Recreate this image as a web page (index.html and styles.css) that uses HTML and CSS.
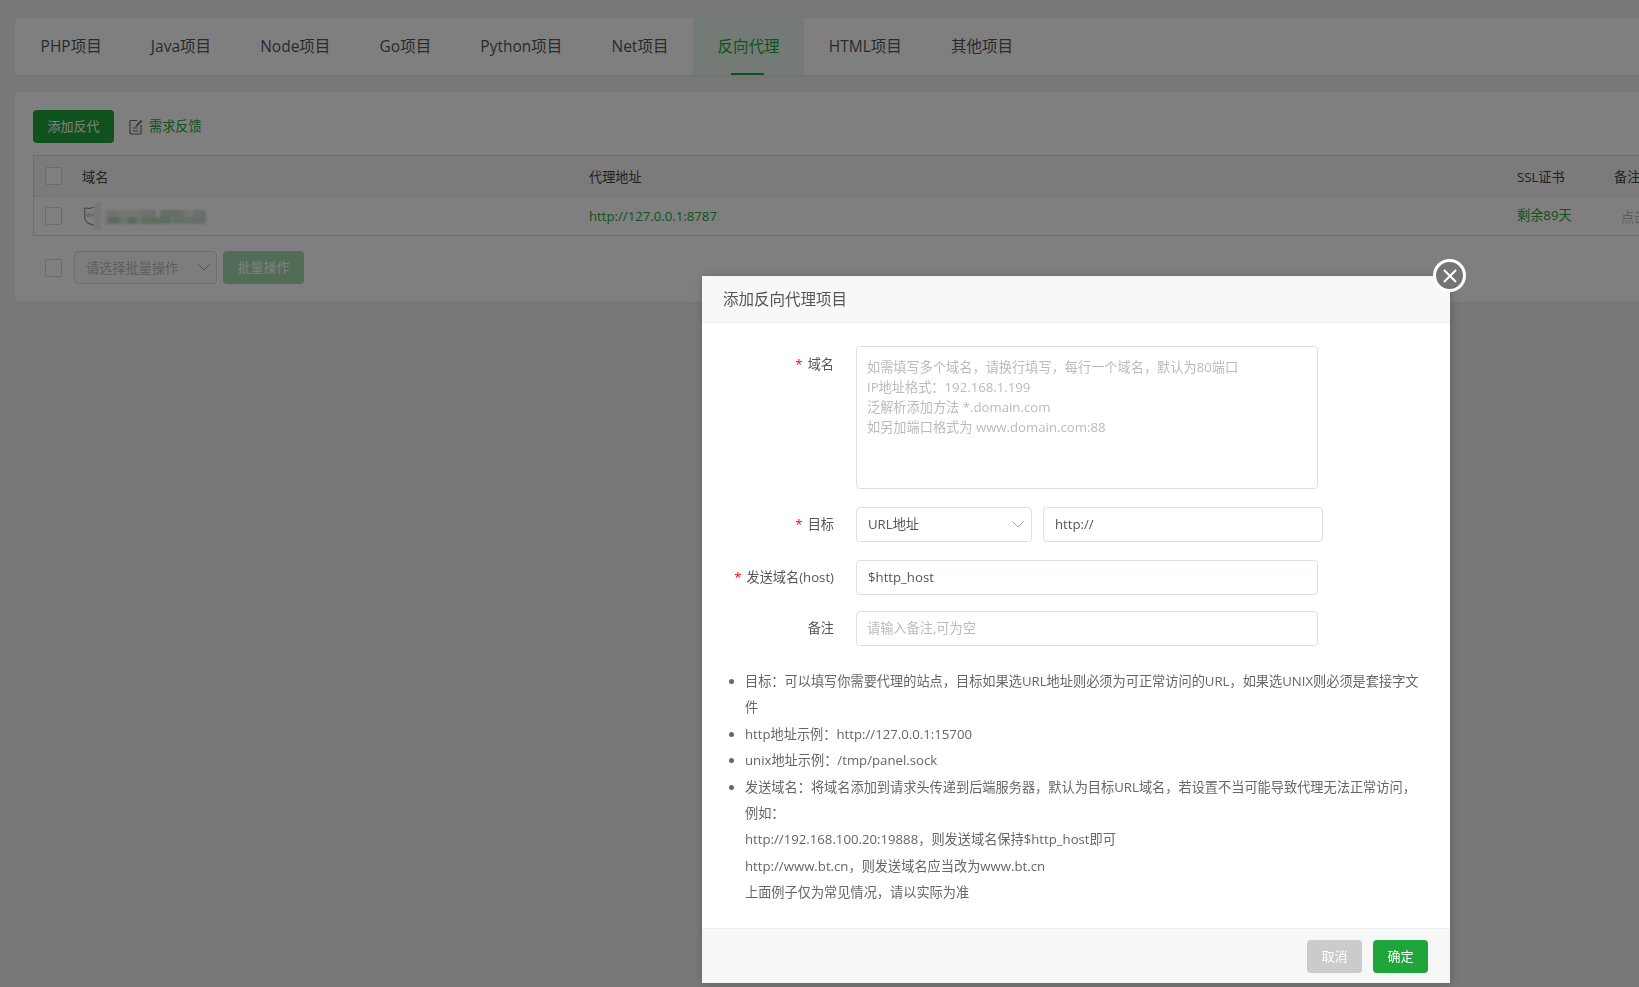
FILE: index.html
```html
<!DOCTYPE html>
<html lang="zh-CN">
<head>
    <meta charset="UTF-8">
    <meta name="viewport" content="width=device-width, initial-scale=1.0">
    <title>反向代理</title>
    <link rel="stylesheet" href="styles.css">
</head>
<body>

    <div class="page">
        <!-- Project tabs -->
        <div class="card tabs">
            <span class="tab">PHP项目</span>
            <span class="tab">Java项目</span>
            <span class="tab">Node项目</span>
            <span class="tab">Go项目</span>
            <span class="tab">Python项目</span>
            <span class="tab">Net项目</span>
            <span class="tab active">反向代理</span>
            <span class="tab">HTML项目</span>
            <span class="tab">其他项目</span>
        </div>

        <!-- Proxy list -->
        <div class="card content">
            <div class="toolbar">
                <button class="btn btn-green btn-add">添加反代</button>
                <a class="feedback">
                    <svg class="feedback-icon" viewBox="0 0 14 16" fill="none" stroke="#6f6f6f" stroke-width="1.200">
                        <path d="M8.500 1.500H2a1 1 0 0 0-1 1V14a1 1 0 0 0 1 1h9a1 1 0 0 0 1-1V6"/>
                        <path d="M3.500 9h5M3.500 12h6"/>
                        <path d="M7 6.500 12 1l1.200 1.200-5.200 5.300-1.300.3z" fill="#6f6f6f" stroke-width=".6"/>
                    </svg>
                    需求反馈
                </a>
            </div>

            <div class="table">
                <div class="row row-head">
                    <span class="check"></span>
                    <span class="col-name">域名</span>
                    <span class="col-url">代理地址</span>
                    <span class="col-ssl">SSL证书</span>
                    <span class="col-note">备注</span>
                </div>
                <div class="row">
                    <span class="check"></span>
                    <span class="col-name">
                        <svg class="shield" viewBox="0 0 11 20" fill="none" stroke="#8a8a8a" stroke-width="1.100">
                            <path d="M10.500 1 5.500 2.500.7 2v9.500c0 3.500 4 6.500 9.800 8"/>
                            <text x="2" y="10.500" font-size="5" fill="#999" stroke="none">WAF</text>
                        </svg>
                        <svg class="mosaic" viewBox="0 0 112 28">
                            <rect x="0" y="0" width="7" height="28" fill="#efefef"/>
                            <rect x="12" y="8" width="12" height="7" fill="#dbe9dd"/>
                            <rect x="24" y="8" width="22" height="7" fill="#e6efe7"/>
                            <rect x="46" y="8" width="16" height="7" fill="#d8e7da"/>
                            <rect x="66" y="8" width="24" height="7" fill="#c8dfcb"/>
                            <rect x="90" y="8" width="10" height="7" fill="#e9f0ea"/>
                            <rect x="100" y="8" width="12" height="7" fill="#cfe2d2"/>
                            <rect x="10" y="15" width="4" height="7" fill="#e6efe7"/>
                            <rect x="14" y="15" width="12" height="7" fill="#b9d6be"/>
                            <rect x="26" y="15" width="8" height="7" fill="#d7e6d9"/>
                            <rect x="34" y="15" width="8" height="7" fill="#b5d3ba"/>
                            <rect x="42" y="15" width="6" height="7" fill="#dceadd"/>
                            <rect x="48" y="15" width="28" height="7" fill="#c0dac4"/>
                            <rect x="76" y="15" width="4" height="7" fill="#dceadd"/>
                            <rect x="80" y="15" width="32" height="7" fill="#cbdfce"/>
                        </svg>
                    </span>
                    <span class="col-url link">http://127.0.0.1:8787</span>
                    <span class="col-ssl ssl-ok">剩余89天</span>
                    <span class="col-note note-add">点击添加备注</span>
                </div>
            </div>

            <div class="batch">
                <span class="check"></span>
                <div class="batch-select">
                    <span>请选择批量操作</span>
                    <svg class="chevron" viewBox="0 0 12 7" fill="none" stroke="#a0a0a0" stroke-width="1"><path d="M.5.500 6 6l5.500-5.500"/></svg>
                </div>
                <button class="btn btn-batch">批量操作</button>
            </div>
        </div>
    </div>

    <div class="overlay"></div>

    <!-- Add proxy dialog -->
    <div class="dialog">
        <div class="dialog-title">添加反向代理项目</div>
        <div class="dialog-body">
            <div class="form-row form-row-tall">
                <label class="form-label"><i>*</i>域名</label>
                <div class="field field-area">如需填写多个域名，请换行填写，每行一个域名，默认为80端口<br>IP地址格式：192.168.1.199<br>泛解析添加方法 *.domain.com<br>如另加端口格式为 www.domain.com:88</div>
            </div>
            <div class="form-row">
                <label class="form-label"><i>*</i>目标</label>
                <div class="field field-select">
                    <span>URL地址</span>
                    <svg class="chevron" viewBox="0 0 12 7" fill="none" stroke="#a8a8a8" stroke-width="1"><path d="M.5.500 6 6l5.500-5.500"/></svg>
                </div>
                <div class="field field-target">http://</div>
            </div>
            <div class="form-row">
                <label class="form-label"><i>*</i>发送域名(host)</label>
                <div class="field">$http_host</div>
            </div>
            <div class="form-row">
                <label class="form-label">备注</label>
                <div class="field field-empty">请输入备注,可为空</div>
            </div>

            <ul class="help">
                <li>目标：可以填写你需要代理的站点，目标如果选URL地址则必须为可正常访问的URL，如果选UNIX则必须是套接字文件</li>
                <li>http地址示例：http://127.0.0.1:15700</li>
                <li>unix地址示例：/tmp/panel.sock</li>
                <li>发送域名：将域名添加到请求头传递到后端服务器，默认为目标URL域名，若设置不当可能导致代理无法正常访问，例如：<br>http://192.168.100.20:19888，则发送域名保持$http_host即可<br>http://www.bt.cn，则发送域名应当改为www.bt.cn<br>上面例子仅为常见情况，请以实际为准</li>
            </ul>
        </div>
        <div class="dialog-foot">
            <button class="btn btn-cancel">取消</button>
            <button class="btn btn-green">确定</button>
        </div>
        <span class="dialog-close">
            <svg viewBox="0 0 14 14" fill="none" stroke="#fff" stroke-width="2"><path d="M1 1l12 12M13 1 1 13"/></svg>
        </span>
    </div>

</body>
</html>
```

FILE: styles.css
```css
html, body {
    height: 100%;
}

body {
    margin: 0;
    overflow: hidden;
    background-color: #f0f0f0;
    color: #666;
    font-family: "Open Sans", "Noto Sans CJK SC", sans-serif;
    font-size: 13.2px;
}

.page {
    padding: 18px 0 0 15px;
    width: 1720px;
    box-sizing: border-box;
}

.card {
    background-color: #fff;
    border-radius: 5px;
    box-shadow: 0 1px 3px rgba(0, 0, 0, 0.05);
}

/* Tabs */
.tabs {
    display: flex;
    height: 57px;
    padding-left: 1px;
}

.tab {
    position: relative;
    padding: 0 24.6px;
    line-height: 57px;
    font-size: 15.5px;
    color: #555;
}

.tab.active {
    color: #20a53a;
    background-color: #e9f6ec;
}

.tab.active::after {
    content: "";
    position: absolute;
    left: 38px;
    bottom: 0;
    width: 33px;
    height: 2px;
    background-color: #20a53a;
}

/* List */
.content {
    margin-top: 17px;
    height: 210px;
    padding: 18px;
    box-sizing: border-box;
}

.toolbar {
    display: flex;
    align-items: center;
    height: 33px;
}

.btn {
    height: 33px;
    width: 55px;
    padding: 0 0 2px;
    border: 0;
    border-radius: 4px;
    color: #fff;
    font-family: inherit;
    font-size: 13px;
}

.btn-green {
    background-color: #20a53a;
}

.btn-add {
    width: 81px;
}

.btn-batch {
    width: 81px;
    margin-left: 6px;
    background-color: #a6d8b0;
}

.btn-cancel {
    background-color: #cbcbcb;
}

.feedback {
    display: flex;
    align-items: center;
    margin-left: 15px;
    margin-top: -3px;
    color: #20a53a;
}

.feedback-icon {
    width: 14px;
    height: 16px;
    margin-top: 3px;
    margin-right: 6px;
}

.table {
    margin-top: 12px;
    border: 1px solid #ddd;
    border-right: 0;
}

.row {
    display: flex;
    align-items: center;
    height: 38px;
    padding-left: 11px;
}

.row-head {
    height: 41px;
    box-sizing: border-box;
    background-color: #f6f6f6;
    border-bottom: 1px solid #e8e8e8;
    color: #444;
}

.check {
    flex: none;
    width: 15px;
    height: 16px;
    background-color: #fff;
    border: 1px solid #d8d8d8;
    border-radius: 2px;
}

.col-name {
    display: flex;
    align-items: center;
    width: 507px;
    margin-left: 20px;
}

.col-url {
    width: 928px;
}

.col-ssl {
    width: 97px;
}

.link,
.ssl-ok {
    color: #20a53a;
}

.ssl-ok {
    padding-bottom: 3px;
}

.note-add {
    margin-left: 7px;
    color: #bbb;
}

.shield {
    width: 11px;
    height: 20px;
    margin-left: 2px;
}

.mosaic {
    width: 112px;
    height: 28px;
    margin-left: -1px;
    filter: blur(0.8px);
}

.batch {
    display: flex;
    align-items: center;
    margin-top: 15px;
    padding-left: 12px;
}

.batch-select {
    display: flex;
    align-items: center;
    justify-content: space-between;
    width: 143px;
    height: 33px;
    margin-left: 12px;
    padding: 0 6px 0 11px;
    box-sizing: border-box;
    background-color: #fbfbfb;
    border: 1px solid #ddd;
    border-radius: 4px;
    color: #bbb;
}

.chevron {
    width: 12px;
    height: 7px;
}

/* Overlay and dialog */
.overlay {
    position: fixed;
    inset: 0;
    background-color: rgba(0, 0, 0, 0.5);
}

.dialog {
    position: absolute;
    left: 702px;
    top: 276px;
    width: 748px;
    height: 707px;
    display: flex;
    flex-direction: column;
    background-color: #fff;
    border-radius: 3px;
    box-shadow: 1px 1px 10px rgba(0, 0, 0, 0.2);
}

.dialog-title {
    flex: none;
    height: 47px;
    padding-left: 21px;
    line-height: 46px;
    box-sizing: border-box;
    background-color: #f8f8f8;
    border-bottom: 1px solid #eee;
    font-size: 15.5px;
    color: #555;
}

.dialog-close {
    position: absolute;
    right: -16px;
    top: -17px;
    display: flex;
    align-items: center;
    justify-content: center;
    width: 33px;
    height: 33px;
    box-sizing: border-box;
    background-color: #757575;
    border: 3px solid #fff;
    border-radius: 50%;
}

.dialog-close svg {
    width: 14px;
    height: 14px;
}

.dialog-body {
    flex: 1;
    padding: 23px 0 0 0;
}

.form-row {
    display: flex;
    align-items: center;
    height: 35px;
    margin-bottom: 18px;
}

.form-row:nth-child(4) {
    margin-bottom: 0;
}

.form-row-tall {
    height: 143px;
    align-items: flex-start;
    margin-bottom: 18px;
}

.form-row-tall .form-label {
    padding-bottom: 0;
    line-height: 36px;
}

.form-row:nth-child(3) {
    margin-bottom: 16px;
}

.form-label {
    width: 132px;
    flex: none;
    padding-bottom: 2px;
    text-align: right;
    color: #555;
}

.form-label i {
    margin-right: 5px;
    font-style: normal;
    color: #ef0808;
}

.field {
    width: 462px;
    height: 35px;
    margin-left: 22px;
    padding: 0 11px;
    box-sizing: border-box;
    line-height: 33px;
    background-color: #fff;
    border: 1px solid #dcdfe6;
    border-radius: 4px;
    color: #555;
}

.field-area {
    height: 143px;
    padding-top: 10px;
    padding-left: 10px;
    line-height: 20px;
    color: #bbb;
}

.field-select {
    display: flex;
    align-items: center;
    justify-content: space-between;
    width: 176px;
    padding-right: 7px;
}

.field-target {
    width: 280px;
    margin-left: 11px;
}

.field-empty {
    padding-left: 10px;
    color: #bbb;
}

.help {
    margin: 22px 0 0;
    padding: 0 0 0 43px;
    width: 682px;
    line-height: 26.4px;
    color: #666;
}

.dialog-foot {
    flex: none;
    display: flex;
    justify-content: flex-end;
    gap: 11px;
    height: 55px;
    padding: 11px 22px 0 0;
    box-sizing: border-box;
    background-color: #f6f8f8;
    border-top: 1px solid #eee;
}
```
